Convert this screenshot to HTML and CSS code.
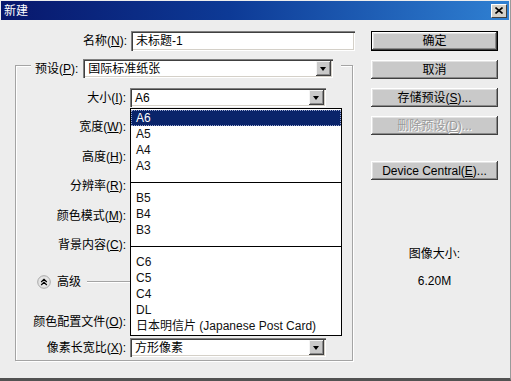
FILE: index.html
```html
<!DOCTYPE html>
<html lang="zh-CN">
<head>
    <meta charset="UTF-8">
    <title>新建</title>
    <link rel="stylesheet" href="styles.css">
</head>
<body>
    <div class="window">
        <div class="titlebar">
            <span class="title">新建</span>
            <span class="close">
                <svg width="8" height="7" viewBox="0 0 8 7"><path d="M0.5 0.5 L7.5 6.5 M7.5 0.5 L0.5 6.5" stroke="#000" stroke-width="1.6"/></svg>
            </span>
        </div>
        <div class="content">
            <div class="main">
                <div class="name-row">
                    <label>名称(<u>N</u>):</label>
                    <div class="field name-field">未标题-1</div>
                </div>

                <div class="group">
                    <div class="legend">
                        <label>预设(<u>P</u>):</label>
                        <div class="field select preset">国际标准纸张<span class="arrow"></span></div>
                    </div>

                    <div class="row">
                        <label>大小(<u>I</u>):</label>
                        <div class="field select size">A6<span class="arrow"></span>
                            <!-- opened list -->
                            <ul class="list">
                                <li class="active">A6</li>
                                <li>A5</li>
                                <li>A4</li>
                                <li>A3</li>
                                <li class="sep"></li>
                                <li>B5</li>
                                <li>B4</li>
                                <li>B3</li>
                                <li class="sep"></li>
                                <li>C6</li>
                                <li>C5</li>
                                <li>C4</li>
                                <li>DL</li>
                                <li>日本明信片 (Japanese Post Card)</li>
                            </ul>
                        </div>
                    </div>
                    <!-- these fields sit under the open list -->
                    <div class="row">
                        <label>宽度(<u>W</u>):</label>
                        <div class="field size"></div>
                    </div>
                    <div class="row gap-11">
                        <label>高度(<u>H</u>):</label>
                        <div class="field size"></div>
                    </div>
                    <div class="row">
                        <label>分辨率(<u>R</u>):</label>
                        <div class="field size"></div>
                    </div>
                    <div class="row gap-11">
                        <label>颜色模式(<u>M</u>):</label>
                        <div class="field size"></div>
                    </div>
                    <div class="row">
                        <label>背景内容(<u>C</u>):</label>
                        <div class="field size"></div>
                    </div>
                    <div class="advanced">
                        <svg class="adv-icon" width="14" height="14" viewBox="0 0 14 14">
                            <circle cx="7" cy="7" r="6.3" fill="#e4e4e4" stroke="#a8a8a8"/>
                            <path d="M4.2 7 L7 4.4 L9.8 7 M4.2 10 L7 7.4 L9.8 10" fill="none" stroke="#000" stroke-width="1.2"/>
                        </svg>
                        <span>高级</span>
                        <span class="rule"></span>
                    </div>
                    <div class="row profile">
                        <label>颜色配置文件(<u>O</u>):</label>
                        <div class="field size"></div>
                    </div>
                    <div class="row pixel">
                        <label>像素长宽比(<u>X</u>):</label>
                        <div class="field select size">方形像素<span class="arrow"></span></div>
                    </div>
                </div>
            </div>

            <div class="side">
                <button class="btn default">确定</button>
                <button class="btn">取消</button>
                <button class="btn">存储预设(<u>S</u>)...</button>
                <button class="btn disabled">删除预设(<u>D</u>)...</button>
                <button class="btn device">Device Central(<u>E</u>)...</button>

                <div class="image-size">
                    <div>图像大小:</div>
                    <div class="value">6.20M</div>
                </div>
            </div>
        </div>
    </div>
</body>
</html>
```

FILE: styles.css
```css
html, body {
    margin: 0;
}
body {
    width: 511px;
    height: 381px;
    overflow: hidden;
    font-family: "Liberation Sans", "Noto Sans CJK SC", sans-serif;
    font-size: 12px;
    line-height: 16px;
    color: #000;
}
u {
    text-underline-offset: 1px;
}
.window {
    box-sizing: border-box;
    width: 511px;
    height: 381px;
    padding: 1px 1px 0;
    background: #ededed;
    border-right: 1px solid #9a9a9a;
    border-bottom: 3px solid #525252;
    display: flex;
    flex-direction: column;
}
.titlebar {
    height: 19px;
    flex: none;
    display: flex;
    align-items: center;
    justify-content: space-between;
    padding: 0 2px 0 3px;
    background: linear-gradient(90deg, #08176c 0%, #0d3a96 45%, #2f80d2 100%);
    color: #fff;
}
.close {
    box-sizing: border-box;
    width: 16px;
    height: 14px;
    display: flex;
    align-items: center;
    justify-content: center;
    background: #d4d0c8;
    border: 1px solid;
    border-color: #fff #404040 #404040 #fff;
}
.content {
    display: flex;
    flex: 1;
}
.main {
    width: 356px;
    padding-top: 11px;
}
.name-row {
    display: flex;
    align-items: center;
    height: 20px;
}
.name-row label {
    width: 126px;
    text-align: right;
}
.field {
    box-sizing: border-box;
    position: relative;
    height: 19px;
    padding: 2px 4px 0 5px;
    background: #fff;
    white-space: nowrap;
    box-shadow: inset 1px 1px #808080, inset 2px 2px #404040,
                inset -1px -1px #fff, inset -2px -2px #d4d0c8;
}
.name-field {
    width: 224px;
    height: 20px;
    margin-left: 4px;
    padding-top: 2px;
}
.arrow {
    position: absolute;
    top: 2px;
    right: 2px;
    width: 15px;
    height: 15px;
    box-sizing: border-box;
    background: #c9c9c9;
    box-shadow: inset -1px -1px #404040, inset 1px 1px #f4f4f4, inset -2px -2px #8a8a8a;
}
.arrow::after {
    content: "";
    position: absolute;
    left: 4px;
    top: 6px;
    border-left: 3.5px solid transparent;
    border-right: 3.5px solid transparent;
    border-top: 4px solid #000;
}
.group {
    box-sizing: border-box;
    width: 338px;
    margin: 14px 0 0 14px;
    padding-bottom: 3px;
    border: 1px solid #a4a4a4;
    box-shadow: inset 1px 1px #fff, 1px 1px #fff;
    display: flex;
    flex-direction: column;
    align-items: flex-start;
}
.legend {
    display: flex;
    align-items: center;
    gap: 5px;
    height: 19px;
    margin: -7px 0 0 15px;
    padding: 0 8px 0 4px;
    background: #ededed;
}
.preset {
    width: 250px;
}
.row {
    display: flex;
    align-items: center;
    height: 19px;
    margin-top: 10px;
}
.row label {
    width: 110px;
    text-align: right;
}
.row .field {
    margin-left: 4px;
}
.size {
    width: 196px;
}
.gap-11 {
    margin-top: 11px;
}
.profile {
    margin-top: 21px;
}
.pixel {
    margin-top: 7px;
}
.advanced {
    display: flex;
    align-items: center;
    gap: 6px;
    width: 280px;
    height: 19px;
    margin-top: 18px;
    padding-left: 21px;
    box-sizing: border-box;
}
.rule {
    flex: 1;
    height: 0;
    border-top: 1px solid #a4a4a4;
    border-bottom: 1px solid #fff;
}
.list {
    position: absolute;
    top: calc(100% + 1px);
    left: 0;
    z-index: 2;
    box-sizing: border-box;
    width: 212px;
    margin: 0;
    padding: 1px 0;
    list-style: none;
    background: #fff;
    border: 1px solid #000;
}
.list li {
    height: 16px;
    padding-left: 5px;
    color: #111;
}
.list li.active {
    background: #0a246a;
    color: #fff;
    outline: 1px dotted #9aa6d0;
    outline-offset: -1px;
}
.list li.sep {
    display: flex;
    align-items: center;
    padding: 0;
}
.list li.sep::before {
    content: "";
    flex: 1;
    border-top: 1px solid #000;
}
.side {
    width: 127px;
    margin-left: 14px;
    padding-top: 11px;
    display: flex;
    flex-direction: column;
    gap: 9px;
}
.btn {
    height: 19px;
    padding: 0;
    border: 0;
    background: #c9c9c9;
    font: inherit;
    color: #000;
    box-shadow: inset -1px -1px #404040, inset 1px 1px #fff,
                inset -2px -2px #8a8a8a, inset 2px 2px #e2e2e2;
}
.btn.default {
    box-sizing: border-box;
    height: 20px;
    border: 1px solid #000;
}
.btn.disabled {
    color: #9a9a9a;
    text-shadow: 1px 1px #fff;
}
.btn.device {
    margin-top: 17px;
}
.image-size {
    margin-top: 57px;
    text-align: center;
}
.image-size .value {
    margin-top: 11px;
}
```
